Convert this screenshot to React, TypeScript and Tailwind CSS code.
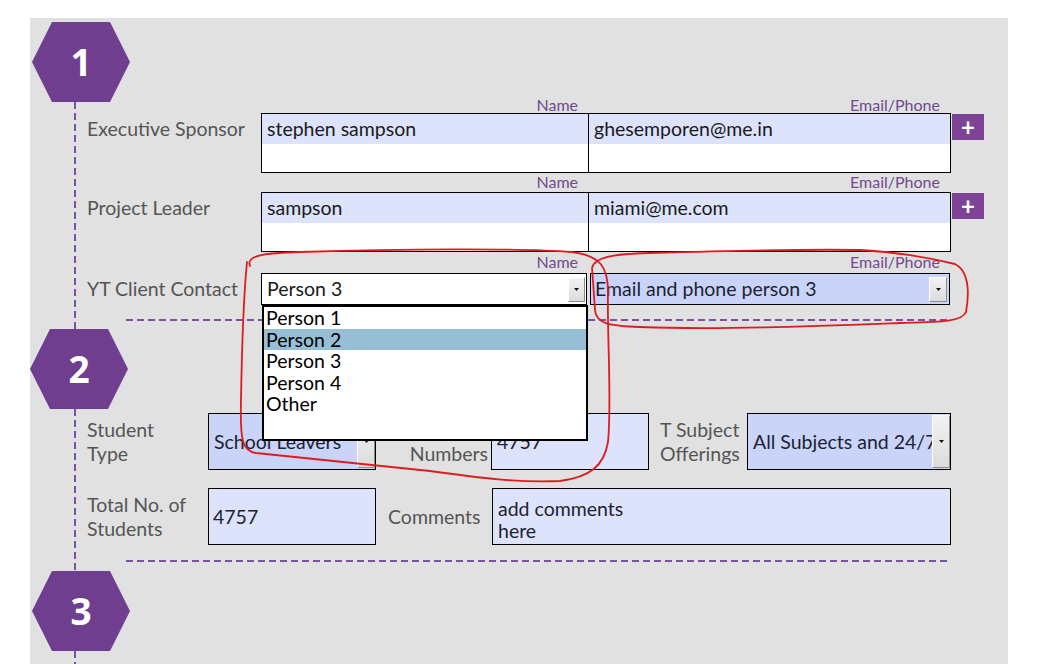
import React from 'react';

const dashH = 'h-[2px] bg-[repeating-linear-gradient(90deg,#7b52a0_0_7px,transparent_7px_11px)]';
const dashV = 'w-[2px] bg-[repeating-linear-gradient(180deg,#7b52a0_0_7px,transparent_7px_11px)]';

function Hex({ n, className }: { n: string; className: string }) {
    return (
        <div
            className={`w-[98px] h-[80px] shrink-0 bg-[#703e8f] [clip-path:polygon(20.4%_0,79.6%_0,100%_50%,79.6%_100%,20.4%_100%,0_50%)] flex items-center justify-center text-white font-['Open_Sans',sans-serif] font-bold text-[37px] ${className}`}
        >
            {n}
        </div>
    );
}

function DropBtn({ className }: { className: string }) {
    return (
        <div
            className={`flex items-center justify-center bg-[linear-gradient(#f2f2f2,#dcdcdc)] border border-t-white border-l-white border-r-[#8c8c8c] border-b-[#8c8c8c] ${className}`}
        >
            <svg width="5" height="3" viewBox="0 0 5 3">
                <path d="M0 0h5L2.5 3z" fill="#111" />
            </svg>
        </div>
    );
}

function HeaderRow({ h }: { h: string }) {
    return (
        <div className={`flex items-end ml-[174px] w-[690px] text-[16px] leading-[16px] text-[#6e4b91] ${h}`}>
            <div className="w-[327px] text-right pr-[10px]">Name</div>
            <div className="w-[363px] text-right pr-[11px]">Email/Phone</div>
        </div>
    );
}

function ContactRow({ label, name, email }: { label: string; name: string; email: string }) {
    return (
        <div className="flex items-start h-[60px]">
            <div className="w-[174px] pt-[1px] text-[19.5px] leading-[30px] text-[#555555]">{label}</div>
            <div className="w-[690px] h-[60px] border border-black flex bg-white">
                <div className="w-[327px] border-r border-black">
                    <div className="h-[30px] bg-[#dce3fb] px-[5px] text-[19.5px] leading-[30px] text-[#1a1a1a]">{name}</div>
                </div>
                <div className="flex-1">
                    <div className="h-[30px] bg-[#dce3fb] px-[5px] text-[19.5px] leading-[30px] text-[#1a1a1a]">{email}</div>
                </div>
            </div>
            <button className="ml-[1px] mt-[1px] w-[32px] h-[26px] bg-[#7c4397] text-white text-[24px] leading-[24px] font-bold flex items-center justify-center">
                +
            </button>
        </div>
    );
}

export default function App() {
    const people = ['Person 1', 'Person 2', 'Person 3', 'Person 4', 'Other'];

    return (
        <div className="relative w-[1046px] h-[664px] bg-white overflow-hidden font-['Lato',sans-serif] pl-[30px] pt-[18px]">
            <div className="w-[978px] h-[646px] bg-[#e1e1e1] flex">
                {/* timeline rail */}
                <div className="w-[57px] shrink-0 flex flex-col">
                    <Hex n="1" className="ml-[2px] mt-[4px]" />
                    <div className={`ml-[44px] h-[227px] ${dashV}`} />
                    <Hex n="2" className="ml-0" />
                    <div className={`ml-[44px] h-[162px] ${dashV}`} />
                    <Hex n="3" className="ml-[2px]" />
                    <div className={`ml-[44px] flex-1 ${dashV}`} />
                </div>

                {/* form content */}
                <div className="flex-1 flex flex-col pt-[79px]">
                    <HeaderRow h="h-[16px]" />
                    <ContactRow label="Executive Sponsor" name="stephen sampson" email="ghesemporen@me.in" />
                    <HeaderRow h="h-[19px] pb-[2px]" />
                    <ContactRow label="Project Leader" name="sampson" email="miami@me.com" />
                    <HeaderRow h="h-[21px] pb-[3px]" />

                    <div className="flex items-center h-[32px]">
                        <div className="w-[174px] text-[19.5px] text-[#555555]">YT Client Contact</div>
                        <div className="relative w-[326px] h-[32px] border border-black bg-white flex items-center justify-between">
                            <span className="pl-[5px] text-[19.5px] text-[#1a1a1a]">Person 3</span>
                            <DropBtn className="w-[17px] h-[25px] mr-[1px]" />
                            <div className="absolute left-[0px] top-[31px] w-[326px] h-[136px] border-2 border-black bg-white z-10">
                                {people.map((p) => (
                                    <div
                                        key={p}
                                        className={`h-[21.5px] leading-[21.5px] pl-[2px] text-[19.5px] text-black ${p === 'Person 2' ? 'bg-[#96bfd6]' : ''}`}
                                    >
                                        {p}
                                    </div>
                                ))}
                            </div>
                        </div>
                        <div className="ml-[3px] w-[360px] h-[32px] border border-black bg-[#c9d4f8] flex items-center justify-between">
                            <span className="pl-[4px] text-[19.5px] text-[#1c2330]">Email and phone person 3</span>
                            <DropBtn className="w-[18px] h-[25px] mr-[2px]" />
                        </div>
                    </div>

                    <div className={`ml-[39px] mt-[14px] w-[822px] ${dashH}`} />

                    {/* section 2 */}
                    <div className="mt-[92px] flex items-center h-[57px]">
                        <div className="w-[121px] text-[19.5px] leading-[24px] text-[#555555]">
                            Student
                            <br />
                            Type
                        </div>
                        <div className="w-[168px] h-[57px] border border-black bg-[#c9d4f8] flex items-center justify-between overflow-hidden">
                            <span className="pl-[5px] text-[19.5px] text-[#1c2330] whitespace-nowrap">School Leavers</span>
                            <DropBtn className="w-[18px] h-[53px] mr-[0px] shrink-0" />
                        </div>
                        <div className="w-[115px] pr-[3px] text-right text-[19.5px] leading-[24px] text-[#555555] pt-[1px]">
                            Student
                            <br />
                            Numbers
                        </div>
                        <div className="w-[158px] h-[57px] border border-black bg-[#dce3fb] flex items-center pl-[5px] text-[19.5px] text-[#1c2330]">
                            4757
                        </div>
                        <div className="w-[98px] pl-[11px] text-[19.5px] leading-[24px] text-[#555555] whitespace-nowrap">
                            T Subject
                            <br />
                            Offerings
                        </div>
                        <div className="w-[204px] h-[57px] border border-black bg-[#c9d4f8] flex items-center justify-between overflow-hidden">
                            <span className="pl-[5px] text-[19.5px] text-[#1c2330] whitespace-nowrap overflow-hidden">All Subjects and 24/7</span>
                            <DropBtn className="w-[18px] h-[53px] mr-[0px] shrink-0" />
                        </div>
                    </div>

                    <div className="mt-[18px] flex items-center h-[57px]">
                        <div className="w-[121px] text-[19.5px] leading-[24px] text-[#555555]">
                            Total No. of
                            <br />
                            Students
                        </div>
                        <div className="w-[168px] h-[57px] border border-black bg-[#dce3fb] flex items-center pl-[4px] text-[19.5px] text-[#1c2330]">
                            4757
                        </div>
                        <div className="w-[116px] pl-[12px] text-[19.5px] text-[#555555]">Comments</div>
                        <div className="w-[459px] h-[57px] border border-black bg-[#dce3fb] pl-[5px] pt-[9px] text-[19.5px] leading-[22px] text-[#1c2330]">
                            add comments
                            <br />
                            here
                        </div>
                    </div>

                    <div className={`ml-[39px] mt-[15px] w-[822px] ${dashH}`} />
                </div>
            </div>

            {/* hand-drawn red annotations */}
            <svg className="absolute inset-0 pointer-events-none z-20" width="1046" height="664" viewBox="0 0 1046 664" fill="none">
                <path
                    d="M250 266 C 246 256, 262 253, 300 252 C 400 249, 520 248, 572 252 C 600 256, 608 266, 608 292 C 607 340, 612 400, 608 442 C 604 466, 590 477, 560 481 C 520 483, 480 478, 430 471 C 360 464, 300 458, 256 453 C 242 451, 240 440, 241 400 C 242 340, 244 292, 247 262"
                    stroke="#e01b1f"
                    strokeWidth="1.8"
                    strokeLinecap="round"
                />
                <path
                    d="M592 268 C 594 258, 610 254, 650 253 C 720 251, 800 249, 860 250 C 900 252, 930 258, 955 264 C 968 270, 970 290, 966 312 C 962 322, 940 322, 900 323 C 820 326, 720 330, 640 327 C 610 326, 596 324, 595 310 C 594 295, 593 280, 592 268"
                    stroke="#e01b1f"
                    strokeWidth="1.8"
                    strokeLinecap="round"
                />
            </svg>
        </div>
    );
}
